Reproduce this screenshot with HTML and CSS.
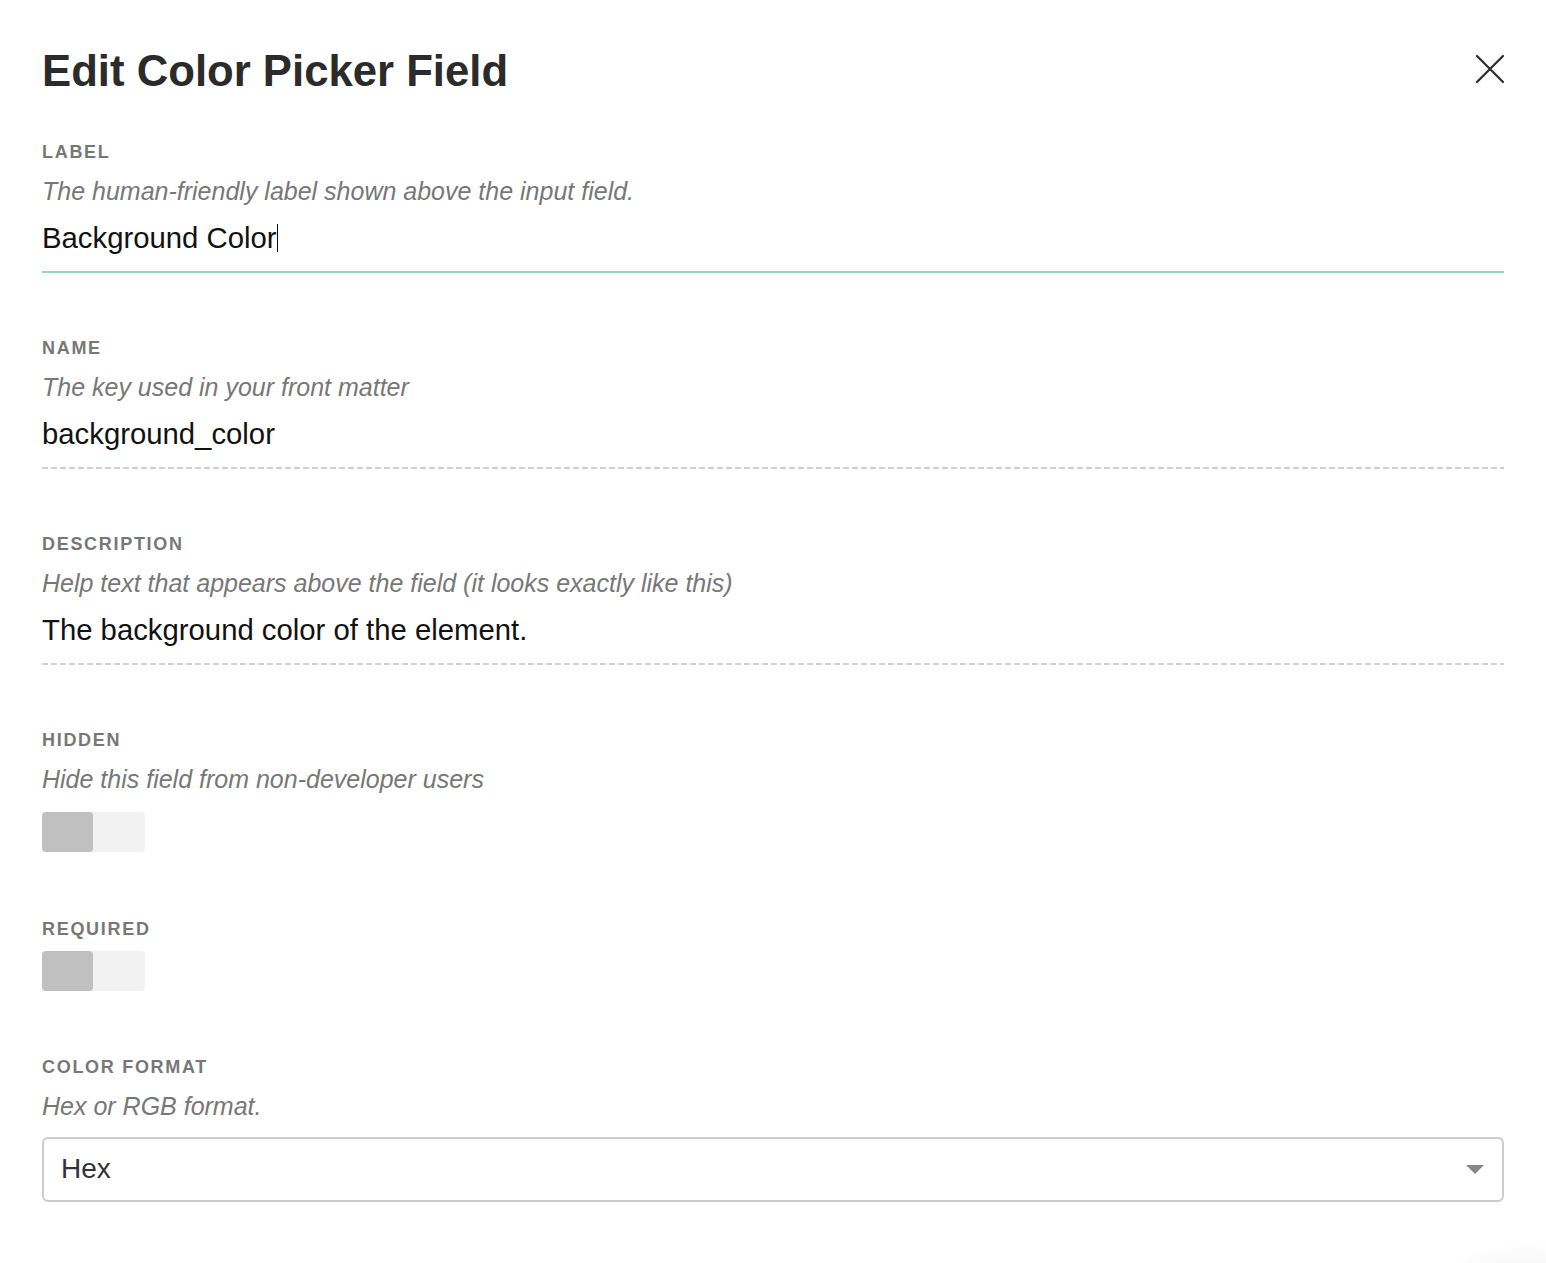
FILE: index.html
```html
<!DOCTYPE html>
<html lang="en">
<head>
<meta charset="utf-8">
<title>Edit Color Picker Field</title>
<link rel="stylesheet" href="styles.css">
</head>
<body>
<div class="modal">
  <header class="modal-header">
    <h1 class="modal-title">Edit Color Picker Field</h1>
    <button class="close-btn" aria-label="Close">
      <svg width="30" height="30" viewBox="0 0 30 30"><path d="M2 2 L28 28 M28 2 L2 28" stroke="#2b2b2b" stroke-width="2.2" stroke-linecap="round" fill="none"/></svg>
    </button>
  </header>

  <div class="field">
    <div class="field-label">Label</div>
    <div class="field-help">The human-friendly label shown above the input field.</div>
    <div class="field-input focused">Background Color<span class="caret"></span></div>
  </div>

  <div class="field">
    <div class="field-label">Name</div>
    <div class="field-help">The key used in your front matter</div>
    <div class="field-input dashed">background_color</div>
  </div>

  <div class="field">
    <div class="field-label">Description</div>
    <div class="field-help">Help text that appears above the field (it looks exactly like this)</div>
    <div class="field-input dashed">The background color of the element.</div>
  </div>

  <div class="field">
    <div class="field-label">Hidden</div>
    <div class="field-help">Hide this field from non-developer users</div>
    <div class="toggle toggle-after-help"><span class="toggle-knob"></span></div>
  </div>

  <div class="field">
    <div class="field-label">Required</div>
    <div class="toggle toggle-after-label"><span class="toggle-knob"></span></div>
  </div>

  <div class="field">
    <div class="field-label">Color Format</div>
    <div class="field-help">Hex or RGB format.</div>
    <div class="select">
      <span class="select-value">Hex</span>
      <span class="select-arrow"></span>
    </div>
  </div>
</div>
<div class="fab-shadow"></div>
</body>
</html>
```

FILE: styles.css
```css
html, body {
  margin: 0;
  padding: 0;
  background: #ffffff;
}

body {
  font-family: "Liberation Sans", Arial, sans-serif;
  width: 1546px;
  height: 1263px;
  overflow: hidden;
  position: relative;
}

.modal {
  padding: 0 42px;
}

.modal-header {
  display: flex;
  justify-content: space-between;
  align-items: flex-start;
  padding-top: 44px;
}

.modal-title {
  margin: 0;
  font-size: 43.7px;
  line-height: 54px;
  font-weight: 700;
  color: #2b2b2b;
}

.close-btn {
  border: 0;
  background: none;
  padding: 0;
  margin-top: 10px;
  margin-right: -1px;
  width: 30px;
  height: 30px;
  display: flex;
}

.field {
  display: flex;
  flex-direction: column;
  align-items: flex-start;
}

.modal-header + .field {
  margin-top: 44px;
}

.field + .field {
  margin-top: 65px;
}

.field-label {
  font-size: 18px;
  line-height: 20px;
  font-weight: 700;
  text-transform: uppercase;
  letter-spacing: 1.7px;
  color: #777777;
}

.field-help {
  margin-top: 14px;
  font-size: 25px;
  line-height: 30px;
  font-style: italic;
  color: #777777;
}

.field-input {
  margin-top: 14px;
  align-self: stretch;
  font-size: 29.3px;
  line-height: 36px;
  color: #111111;
  padding-bottom: 15px;
  border-bottom: 2px solid #98d4c2;
  display: flex;
  align-items: center;
}

.field-input.dashed {
  border-bottom: 0;
  padding-bottom: 17px;
  background-image: repeating-linear-gradient(to right, #d0d0d0 0, #d0d0d0 6px, transparent 6px, transparent 9px);
  background-size: 100% 2px;
  background-repeat: no-repeat;
  background-position: left bottom;
}

.caret {
  display: inline-block;
  width: 1.5px;
  height: 28px;
  background: #111111;
}

.toggle {
  width: 103px;
  height: 40px;
  background: #f2f2f2;
  border-radius: 4px;
  display: flex;
}

.toggle-after-help {
  margin-top: 18px;
  margin-bottom: 2px;
}

.toggle-after-label {
  margin-top: 12px;
  margin-bottom: 1px;
}

.toggle-knob {
  width: 51px;
  height: 40px;
  background: #c0c0c0;
  border-radius: 4px;
}

.select {
  margin-top: 16px;
  align-self: stretch;
  box-sizing: border-box;
  height: 65px;
  border: 2px solid #cccccc;
  border-radius: 6px;
  display: flex;
  align-items: center;
  justify-content: space-between;
  padding: 0 18px 2px 17px;
}

.select-value {
  font-size: 28px;
  color: #333333;
}

.select-arrow {
  width: 0;
  height: 0;
  border-left: 9px solid transparent;
  border-right: 9px solid transparent;
  border-top: 9px solid #888888;
  margin-top: 1px;
}

.fab-shadow {
  position: absolute;
  right: 0;
  bottom: 0;
  width: 110px;
  height: 30px;
  background: radial-gradient(ellipse 90px 40px at 90px 50px, rgba(0,0,0,0.06) 0%, rgba(0,0,0,0.03) 50%, rgba(0,0,0,0) 100%);
}
```
